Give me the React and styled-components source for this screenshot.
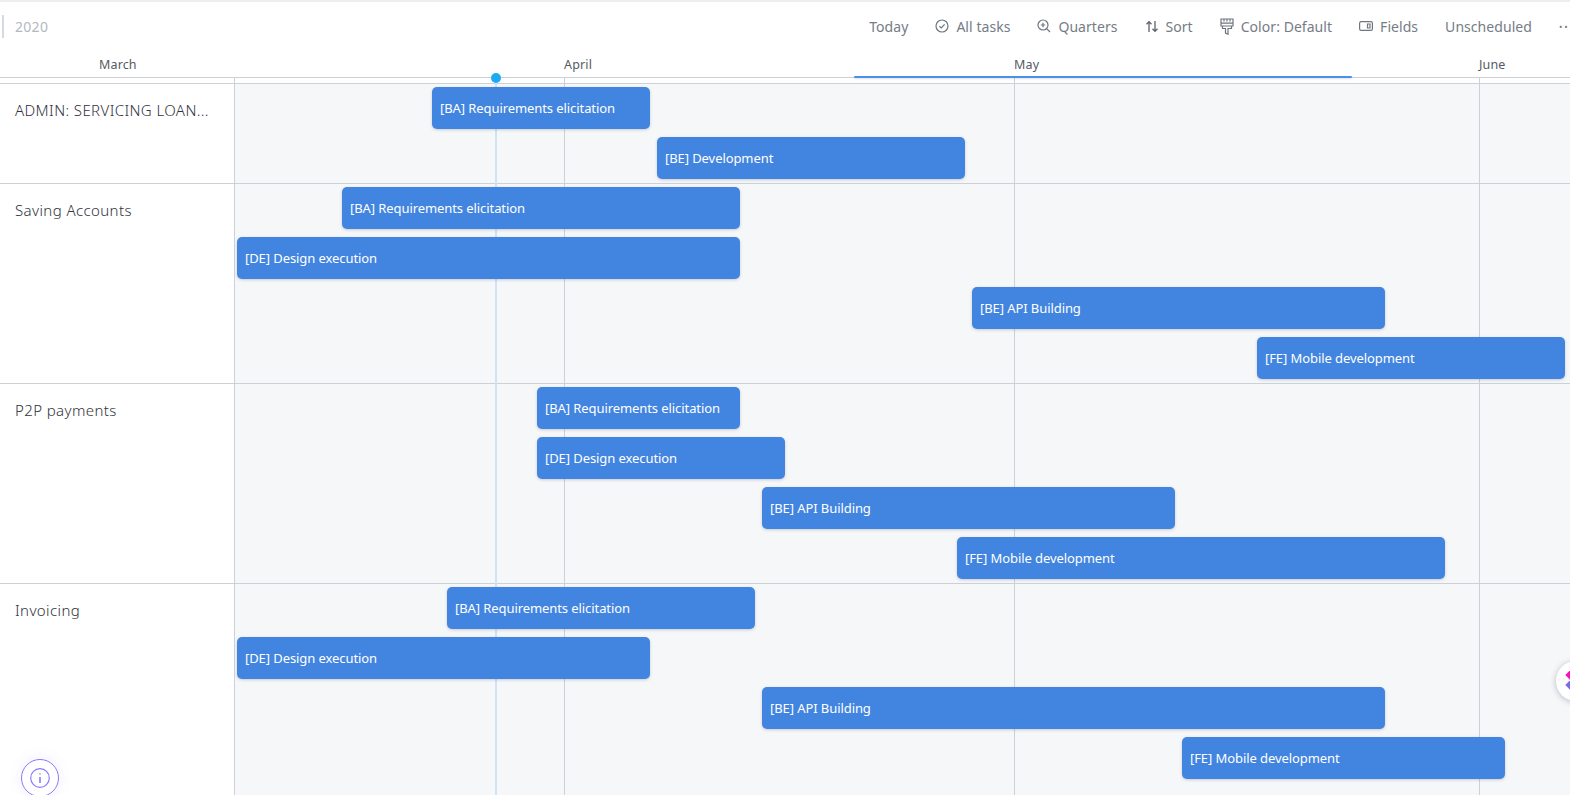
import React from "react";
import styled, { createGlobalStyle } from "styled-components";

const tasks = [
  {
    name: "ADMIN: SERVICING LOAN...",
    bars: [
      { label: "[BA] Requirements elicitation", from: 432, to: 650 },
      { label: "[BE] Development", from: 657, to: 965 },
    ],
  },
  {
    name: "Saving Accounts",
    bars: [
      { label: "[BA] Requirements elicitation", from: 342, to: 740 },
      { label: "[DE] Design execution", from: 237, to: 740 },
      { label: "[BE] API Building", from: 972, to: 1385 },
      { label: "[FE] Mobile development", from: 1257, to: 1565 },
    ],
  },
  {
    name: "P2P payments",
    bars: [
      { label: "[BA] Requirements elicitation", from: 537, to: 740 },
      { label: "[DE] Design execution", from: 537, to: 785 },
      { label: "[BE] API Building", from: 762, to: 1175 },
      { label: "[FE] Mobile development", from: 957, to: 1445 },
    ],
  },
  {
    name: "Invoicing",
    bars: [
      { label: "[BA] Requirements elicitation", from: 447, to: 755 },
      { label: "[DE] Design execution", from: 237, to: 650 },
      { label: "[BE] API Building", from: 762, to: 1385 },
      { label: "[FE] Mobile development", from: 1182, to: 1505 },
    ],
  },
];

const months = [
  { name: "March", width: 564, pad: 99 },
  { name: "April", width: 450, pad: 0 },
  { name: "May", width: 465, pad: 0 },
  { name: "June", width: 91, pad: 0 },
];

const gridLines = [234, 564, 1014, 1479];

const GlobalStyle = createGlobalStyle`
  html, body {
    margin: 0;
    padding: 0;
    background: #fff;
    font-family: "Noto Sans", "Open Sans", sans-serif;
    overflow: hidden;
  }
`;

const Page = styled.div`
  position: relative;
  display: flex;
  flex-direction: column;
  width: 1570px;
  height: 795px;
  overflow: hidden;
  border-top: 2px solid #eceef1;
  box-sizing: border-box;
`;

const ActiveTab = styled.div`
  position: absolute;
  left: 218px;
  top: -2px;
  width: 63px;
  height: 2px;
  background: #8b6cf6;
`;

const Toolbar = styled.div`
  display: flex;
  flex: none;
  align-items: center;
  height: 48px;
  padding-left: 2px;
`;

const Year = styled.div`
  height: 23px;
  line-height: 23px;
  padding-left: 11px;
  border-left: 2px solid #d5dae0;
  font-size: 14px;
  color: #b4b8bf;
  letter-spacing: 0.3px;
`;

const Tools = styled.div`
  display: flex;
  align-items: center;
  gap: 27px;
  margin-left: 821px;
  white-space: nowrap;
`;

const Tool = styled.div`
  display: flex;
  align-items: center;
  gap: 7px;
  font-size: 14px;
  letter-spacing: 0.05px;
  color: #757c86;
  svg {
    display: block;
    flex: none;
  }
`;

const MoreDots = styled.div`
  font-size: 9px;
  letter-spacing: 2px;
  color: #757c86;
`;

const Months = styled.div`
  display: flex;
  flex: none;
  height: 27px;
  border-bottom: 1px solid #ccd1d7;
`;

const Month = styled.div`
  flex: none;
  width: ${(p) => p.$width}px;
  padding-left: ${(p) => p.$pad}px;
  box-sizing: border-box;
  font-size: 12.5px;
  line-height: 30px;
  letter-spacing: 0.15px;
  color: #555b64;
`;

const Strip = styled.div`
  flex: none;
  height: 5px;
`;

const Chart = styled.div`
  display: flex;
  flex-direction: column;
  flex: 1;
  border-top: 1px solid #ccd1d7;
`;

const Swimlane = styled.div`
  display: flex;
  flex: none;
  border-bottom: 1px solid #ccd1d7;
  &:last-child {
    flex: 1;
    border-bottom: 0;
  }
`;

const LaneName = styled.div`
  flex: none;
  width: 235px;
  box-sizing: border-box;
  padding: 16px 0 0 15px;
  font-size: 15px;
  font-weight: 300;
  line-height: 20px;
  letter-spacing: 0.4px;
  color: #2f343c;
  background: #fff;
`;

const Track = styled.div`
  flex: 1;
  background: #f6f7f9;
  padding-top: 3px;
`;

const BarRow = styled.div`
  height: 50px;
  &:last-child {
    height: 46px;
  }
`;

const Bar = styled.div`
  position: relative;
  z-index: 2;
  height: 42px;
  line-height: 42px;
  box-sizing: border-box;
  padding-left: 8px;
  border-radius: 5px;
  background: #4285e1;
  box-shadow: 0 1px 3px rgba(60, 70, 90, 0.25);
  color: #fff;
  font-size: 13px;
  letter-spacing: -0.08px;
  white-space: nowrap;
  overflow: hidden;
`;

const GridLine = styled.div`
  position: absolute;
  top: 75px;
  bottom: 0;
  width: 1px;
  background: #ccd1d7;
  z-index: 1;
`;

const TodayLine = styled.div`
  position: absolute;
  left: 495px;
  top: 76px;
  bottom: 0;
  width: 2px;
  background: #cfe3f5;
  z-index: 1;
`;

const TodayDot = styled.div`
  position: absolute;
  left: 491px;
  top: 71px;
  width: 10px;
  height: 10px;
  border-radius: 50%;
  background: #1eaaf1;
  z-index: 3;
`;

const RangeLine = styled.div`
  position: absolute;
  left: 854px;
  top: 74px;
  width: 498px;
  height: 2px;
  border-radius: 1px;
  background: #4a8fe8;
  box-shadow: 0 1px 2px rgba(60, 70, 90, 0.15);
  z-index: 3;
`;

const InfoButton = styled.div`
  position: absolute;
  left: 21px;
  top: 757px;
  width: 38px;
  height: 38px;
  box-sizing: border-box;
  border: 1px solid #8a7cf5;
  border-radius: 50%;
  background: #fff;
  box-shadow: 0 0 14px rgba(123, 104, 238, 0.12);
  display: flex;
  align-items: center;
  justify-content: center;
  z-index: 4;
`;

const FloatButton = styled.div`
  position: absolute;
  left: 1556px;
  top: 659px;
  width: 40px;
  height: 40px;
  border-radius: 50%;
  background: #fff;
  box-shadow: 0 1px 6px rgba(40, 50, 70, 0.3);
  z-index: 4;
`;

const Diamond = styled.div`
  position: absolute;
  left: 11px;
  top: ${(p) => p.$top}px;
  width: 8px;
  height: 8px;
  transform: rotate(45deg);
  background: ${(p) => p.$color};
`;

const CheckIcon = () => (
  <svg width="14" height="14" viewBox="0 0 14 14" fill="none" stroke="#6f7680" strokeWidth="1.2">
    <circle cx="7" cy="7" r="6" />
    <path d="M4.4 7.2 6.3 9l3.3-3.6" />
  </svg>
);

const ZoomIcon = () => (
  <svg width="14" height="14" viewBox="0 0 14 14" fill="none" stroke="#6f7680" strokeWidth="1.2">
    <circle cx="6" cy="6" r="5" />
    <path d="M9.6 9.6 13 13M6 3.8v4.4M3.8 6h4.4" />
  </svg>
);

const SortIcon = () => (
  <svg width="14" height="13" viewBox="0 0 14 13" fill="none" stroke="#5d636d" strokeWidth="1.3">
    <path d="M4 12V2M1.5 4.2 4 1.600l2.500 2.600M10 1v10M7.500 8.800l2.500 2.600 2.500-2.600" />
  </svg>
);

const BrushIcon = () => (
  <svg width="14" height="17" viewBox="0 0 14 17" fill="none" stroke="#6f7680" strokeWidth="1.2">
    <path d="M1 1h12v7H1zM1 5.200h12M4 1v2.500M7 1v2.500M10 1v2.500" />
    <path d="M2.500 8v2.500h3V15l2.500 1.200V10.500h3.500V8" />
  </svg>
);

const FieldsIcon = () => (
  <svg width="14" height="10" viewBox="0 0 14 10" fill="none" stroke="#6f7680" strokeWidth="1.2">
    <rect x="0.6" y="0.6" width="12.8" height="8.8" rx="1.6" />
    <path d="M8.500 3h2.500v4H8.500z" />
  </svg>
);

const InfoIcon = () => (
  <svg width="20" height="20" viewBox="0 0 20 20" fill="none" stroke="#8a7cf5" strokeWidth="1.2">
    <circle cx="10" cy="10" r="9.300" />
    <path d="M10 9v6" strokeWidth="1.6" />
    <circle cx="10" cy="6" r="0.8" fill="#8a7cf5" stroke="none" />
  </svg>
);

export default function App() {
  return (
    <Page>
      <GlobalStyle />
      <ActiveTab />
      <Toolbar>
        <Year>2020</Year>
        <Tools>
          <Tool>Today</Tool>
          <Tool><CheckIcon />All tasks</Tool>
          <Tool><ZoomIcon />Quarters</Tool>
          <Tool><SortIcon />Sort</Tool>
          <Tool><BrushIcon />Color: Default</Tool>
          <Tool><FieldsIcon />Fields</Tool>
          <Tool>Unscheduled</Tool>
          <MoreDots>••</MoreDots>
        </Tools>
      </Toolbar>
      <Months>
        {months.map((m) => (
          <Month key={m.name} $width={m.width} $pad={m.pad}>{m.name}</Month>
        ))}
      </Months>
      <Strip />
      <Chart>
        {tasks.map((task) => (
          <Swimlane key={task.name}>
            <LaneName>{task.name}</LaneName>
            <Track>
              {task.bars.map((bar) => (
                <BarRow key={bar.label}>
                  <Bar style={{ marginLeft: bar.from - 235, width: bar.to - bar.from }}>{bar.label}</Bar>
                </BarRow>
              ))}
            </Track>
          </Swimlane>
        ))}
      </Chart>

      {gridLines.map((x) => (
        <GridLine key={x} style={{ left: x }} />
      ))}
      <TodayLine />
      <RangeLine />
      <TodayDot />
      <InfoButton><InfoIcon /></InfoButton>
      <FloatButton>
        <Diamond $top={10} $color="#fd0fb5" />
        <Diamond $top={20} $color="#7b68ee" />
      </FloatButton>
    </Page>
  );
}
